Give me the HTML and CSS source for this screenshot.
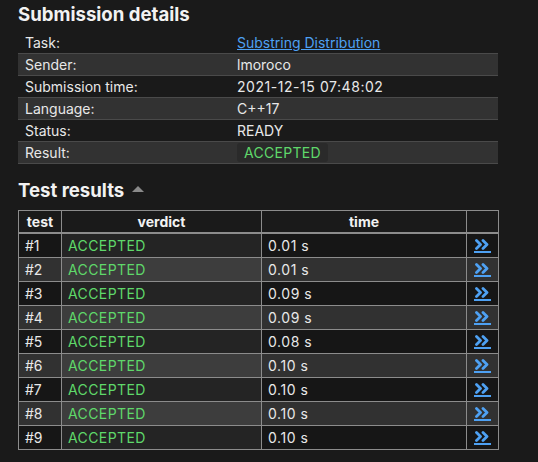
FILE: index.html
```html
<!DOCTYPE html>
<html>
<head>
<meta charset="utf-8">
<link rel="stylesheet" href="styles.css">
</head>
<body>
<div class="page">
  <h2 class="title">Submission details</h2>
  <table class="details">
    <tr><td class="key">Task:</td><td><a class="link" href="#">Substring Distribution</a></td></tr>
    <tr><td class="key">Sender:</td><td>lmoroco</td></tr>
    <tr><td class="key">Submission time:</td><td class="num">2021-12-15 07:48:02</td></tr>
    <tr><td class="key">Language:</td><td>C++17</td></tr>
    <tr><td class="key">Status:</td><td>READY</td></tr>
    <tr><td class="key">Result:</td><td><span class="badge">ACCEPTED</span></td></tr>
  </table>

  <h3 class="subtitle">Test results <span class="tri"></span></h3>
  <table class="results">
    <thead>
      <tr><th class="c-test">test</th><th class="c-verdict">verdict</th><th class="c-time">time</th><th class="c-link"></th></tr>
    </thead>
    <tbody>
      <tr><td>#1</td><td class="v">ACCEPTED</td><td class="num">0.01 s</td><td class="l"><a href="#" class="more"><svg width="15" height="11" viewBox="0 0 15 11"><path d="M1.5 1.5 L5.5 5.5 L1.5 9.5 M8 1.5 L12 5.5 L8 9.5" fill="none" stroke="#4ea1f3" stroke-width="2.8" stroke-linecap="round" stroke-linejoin="round"/></svg></a></td></tr>
      <tr><td>#2</td><td class="v">ACCEPTED</td><td class="num">0.01 s</td><td class="l"><a href="#" class="more"><svg width="15" height="11" viewBox="0 0 15 11"><path d="M1.5 1.5 L5.5 5.5 L1.5 9.5 M8 1.5 L12 5.5 L8 9.5" fill="none" stroke="#4ea1f3" stroke-width="2.8" stroke-linecap="round" stroke-linejoin="round"/></svg></a></td></tr>
      <tr><td>#3</td><td class="v">ACCEPTED</td><td class="num">0.09 s</td><td class="l"><a href="#" class="more"><svg width="15" height="11" viewBox="0 0 15 11"><path d="M1.5 1.5 L5.5 5.5 L1.5 9.5 M8 1.5 L12 5.5 L8 9.5" fill="none" stroke="#4ea1f3" stroke-width="2.8" stroke-linecap="round" stroke-linejoin="round"/></svg></a></td></tr>
      <tr><td>#4</td><td class="v">ACCEPTED</td><td class="num">0.09 s</td><td class="l"><a href="#" class="more"><svg width="15" height="11" viewBox="0 0 15 11"><path d="M1.5 1.5 L5.5 5.5 L1.5 9.5 M8 1.5 L12 5.5 L8 9.5" fill="none" stroke="#4ea1f3" stroke-width="2.8" stroke-linecap="round" stroke-linejoin="round"/></svg></a></td></tr>
      <tr><td>#5</td><td class="v">ACCEPTED</td><td class="num">0.08 s</td><td class="l"><a href="#" class="more"><svg width="15" height="11" viewBox="0 0 15 11"><path d="M1.5 1.5 L5.5 5.5 L1.5 9.5 M8 1.5 L12 5.5 L8 9.5" fill="none" stroke="#4ea1f3" stroke-width="2.8" stroke-linecap="round" stroke-linejoin="round"/></svg></a></td></tr>
      <tr><td>#6</td><td class="v">ACCEPTED</td><td class="num">0.10 s</td><td class="l"><a href="#" class="more"><svg width="15" height="11" viewBox="0 0 15 11"><path d="M1.5 1.5 L5.5 5.5 L1.5 9.5 M8 1.5 L12 5.5 L8 9.5" fill="none" stroke="#4ea1f3" stroke-width="2.8" stroke-linecap="round" stroke-linejoin="round"/></svg></a></td></tr>
      <tr><td>#7</td><td class="v">ACCEPTED</td><td class="num">0.10 s</td><td class="l"><a href="#" class="more"><svg width="15" height="11" viewBox="0 0 15 11"><path d="M1.5 1.5 L5.5 5.5 L1.5 9.5 M8 1.5 L12 5.5 L8 9.5" fill="none" stroke="#4ea1f3" stroke-width="2.8" stroke-linecap="round" stroke-linejoin="round"/></svg></a></td></tr>
      <tr><td>#8</td><td class="v">ACCEPTED</td><td class="num">0.10 s</td><td class="l"><a href="#" class="more"><svg width="15" height="11" viewBox="0 0 15 11"><path d="M1.5 1.5 L5.5 5.5 L1.5 9.5 M8 1.5 L12 5.5 L8 9.5" fill="none" stroke="#4ea1f3" stroke-width="2.8" stroke-linecap="round" stroke-linejoin="round"/></svg></a></td></tr>
      <tr><td>#9</td><td class="v">ACCEPTED</td><td class="num">0.10 s</td><td class="l"><a href="#" class="more"><svg width="15" height="11" viewBox="0 0 15 11"><path d="M1.5 1.5 L5.5 5.5 L1.5 9.5 M8 1.5 L12 5.5 L8 9.5" fill="none" stroke="#4ea1f3" stroke-width="2.8" stroke-linecap="round" stroke-linejoin="round"/></svg></a></td></tr>
    </tbody>
  </table>
</div>
</body>
</html>
```
FILE: styles.css
```css
html, body {
  margin: 0;
  padding: 0;
  background: #1a1a1a;
  color: #e8e8e8;
  font-family: Inter, "Noto Sans", sans-serif;
  font-size: 14px;
}
.page {
  padding: 0 18px;
  width: 480px;
}
.title {
  margin: 0;
  padding-top: 2px;
  font-size: 18.6px;
  font-weight: 700;
  line-height: 24px;
  color: #f2f2f2;
}
.details {
  margin-top: 6px;
  width: 480px;
  border-collapse: collapse;
}
.details td {
  height: 21px;
  padding: 0 7px;
  border-bottom: 1px solid #4a4a4a;
  line-height: 21px;
}
.details td.key {
  width: 198px;
}
.details tr:nth-child(even) td {
  background: #323232;
}
.num {
  letter-spacing: 0.55px;
}
.link {
  color: #4ea1f3;
  text-decoration: underline;
}
.badge {
  display: inline-block;
  background: #2a2a2a;
  color: #5fd86a;
  border-radius: 3px;
  padding: 0 7px;
  line-height: 19px;
  letter-spacing: 0.3px;
}
.subtitle {
  margin: 15px 0 0;
  font-size: 18.6px;
  font-weight: 700;
  line-height: 22px;
  color: #f2f2f2;
  display: flex;
  align-items: center;
  gap: 8px;
}
.tri {
  width: 0;
  height: 0;
  border-left: 6px solid transparent;
  border-right: 6px solid transparent;
  border-bottom: 6px solid #8a8a8a;
  margin-top: -3px;
}
.results {
  margin-top: 9px;
  width: 481px;
  border-collapse: collapse;
}
.results th, .results td {
  border: 1px solid #8c8c8c;
  padding: 0 6px;
  text-align: left;
}
.results th {
  height: 21px;
  font-weight: 700;
  text-align: center;
  border-bottom: 2px solid #8c8c8c;
  background: #1a1a1a;
  color: #f2f2f2;
}
.results td {
  height: 23px;
  background: #161616;
}
.c-test { width: 30px; }
.c-verdict { width: 187px; }
.c-time { width: 192px; }
.results tbody tr:nth-child(even) td {
  background: #313131;
}
.results td.v {
  color: #5fd86a;
  background: #242424;
  letter-spacing: 0.4px;
}
.results tbody tr:nth-child(even) td.v {
  background: #3d3d3d;
}
.results td.l {
  text-align: center;
  padding: 0;
}
.more {
  display: inline-block;
  border-bottom: 2px solid #4ea1f3;
  padding: 0 1px 1px;
  line-height: 0;
  margin-top: 3px;
}
.more svg {
  display: block;
}
```
